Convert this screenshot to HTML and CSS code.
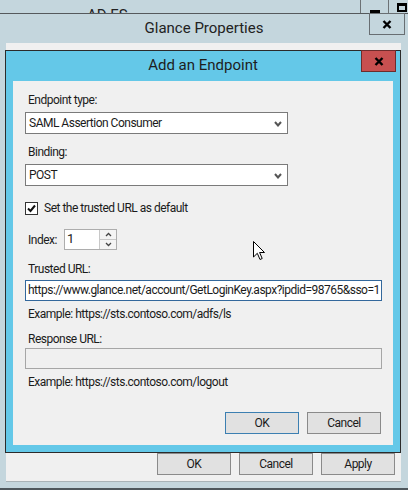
FILE: index.html
```html
<!DOCTYPE html>
<html lang="en">
<head>
  <meta charset="UTF-8">
  <title>Add an Endpoint</title>
  <link rel="stylesheet" href="styles.css">
</head>
<body>
  <div class="screen">

    <!-- window behind -->
    <div class="back-window">
      <div class="back-title">AD FS</div>
      <div class="caption-btn"><span class="min-glyph"></span></div>
      <div class="caption-btn"><span class="max-glyph"></span></div>
    </div>

    <div class="window">
      <div class="window-title">
        Glance Properties
        <div class="close-btn">
          <svg width="10" height="9" viewBox="0 0 10 9"><path d="M1.5 1 L8.5 8 M8.5 1 L1.5 8" stroke="#000" stroke-width="2.4" fill="none"/></svg>
        </div>
      </div>

      <div class="window-body">
        <div class="dialog">
          <div class="dialog-title">
            Add an Endpoint
            <div class="dialog-close">
              <svg width="10" height="9" viewBox="0 0 10 9"><path d="M1.5 1 L8.5 8 M8.5 1 L1.5 8" stroke="#000" stroke-width="2.4" fill="none"/></svg>
            </div>
          </div>

          <div class="dialog-body">
            <div class="field-label">Endpoint type:</div>
            <div class="select gap-4">
              <span>SAML Assertion Consumer</span>
              <svg class="chevron" width="8" height="6" viewBox="0 0 8 6"><path d="M1 1 L4 4.5 L7 1" stroke="#555" stroke-width="2" fill="none"/></svg>
            </div>

            <div class="field-label gap-10">Binding:</div>
            <div class="select gap-4">
              <span>POST</span>
              <svg class="chevron" width="8" height="6" viewBox="0 0 8 6"><path d="M1 1 L4 4.5 L7 1" stroke="#555" stroke-width="2" fill="none"/></svg>
            </div>

            <div class="check-row">
              <span class="checkbox">
                <svg width="11" height="11" viewBox="0 0 11 11"><path d="M2 5.5 L4.5 8 L9 2.5" stroke="#111" stroke-width="2" fill="none"/></svg>
              </span>
              <span>Set the trusted URL as default</span>
            </div>

            <div class="index-row">
              <span class="index-label">Index:</span>
              <div class="spinner">
                <span class="spin-value">1</span>
                <div class="spin-btns">
                  <span class="spin-btn"><svg width="7" height="5" viewBox="0 0 7 5"><path d="M1 4 L3.5 1.5 L6 4" stroke="#444" stroke-width="1.3" fill="none"/></svg></span>
                  <span class="spin-btn"><svg width="7" height="5" viewBox="0 0 7 5"><path d="M1 1 L3.5 3.5 L6 1" stroke="#444" stroke-width="1.3" fill="none"/></svg></span>
                </div>
              </div>
            </div>

            <div class="field-label gap-11">Trusted URL:</div>
            <div class="textbox focused">https://www.glance.net/account/GetLoginKey.aspx?ipdid=98765&amp;sso=1<span class="caret"></span></div>
            <div class="field-label gap-5">Example: https://sts.contoso.com/adfs/ls</div>

            <div class="field-label gap-9">Response URL:</div>
            <div class="textbox disabled"></div>
            <div class="field-label gap-5">Example: https://sts.contoso.com/logout</div>

            <div class="dialog-buttons">
              <div class="button default">OK</div>
              <div class="button">Cancel</div>
            </div>
          </div>
        </div>

        <div class="window-buttons">
          <div class="button">OK</div>
          <div class="button">Cancel</div>
          <div class="button">Apply</div>
        </div>
      </div>
    </div>

    <div class="desk-edge"></div>

    <svg class="cursor" width="13" height="20" viewBox="0 0 13 20">
      <path d="M0.5 0.5 L0.5 16 L4.3 12.3 L7 18.5 L9.2 17.5 L6.6 11.5 L11.5 11.5 Z" fill="#fff" stroke="#000" stroke-width="1"/>
    </svg>
  </div>
</body>
</html>
```

FILE: styles.css
```css
body {
  margin: 0;
  background-color: #c4d6dd;
  font-family: Roboto, "Liberation Sans", sans-serif;
  font-size: 12px;
  color: #1b1b1b;
}

.screen {
  position: relative;
  width: 408px;
  height: 490px;
  overflow: hidden;
}

/* window behind */
.back-window {
  display: flex;
  width: 416px;
  height: 13px;
  border-bottom: 1px solid #55595c;
}

.back-title {
  flex: 1;
  padding: 8px 0 0 87px;
  font-size: 15px;
  line-height: 15px;
  color: #222;
  overflow: hidden;
}

.caption-btn {
  width: 27px;
  border-left: 1px solid #6d7275;
  display: flex;
  justify-content: center;
  align-items: flex-end;
}

.min-glyph {
  width: 10px;
  height: 3px;
  background: #000;
}

.max-glyph {
  width: 6px;
  height: 4px;
  border: 2px solid #000;
  border-top-width: 3px;
  margin-bottom: 1px;
  margin-right: 1px;
}

/* Glance Properties */
.window-title {
  position: relative;
  height: 29px;
  line-height: 29px;
  text-align: center;
  font-size: 15px;
  color: #222;
}

.close-btn {
  position: absolute;
  top: -1px;
  left: 369px;
  width: 34px;
  height: 20px;
  border: 1px solid #686e72;
  display: flex;
  align-items: center;
  justify-content: center;
}

.window-body {
  margin-left: 6px;
  width: 395px;
  background: #f0f0f0;
  padding: 7px 0 6px;
  border-bottom: 1px solid #a9b3b7;
  letter-spacing: -0.5px;
}

.dialog {
  margin-left: -1px;
  border: 1px solid #2b2b2b;
  background: #64c8e8;
  padding: 0 7px 7px;
  width: 380px;
}

.dialog-title {
  position: relative;
  height: 30px;
  line-height: 29px;
  text-align: center;
  font-size: 15px;
  letter-spacing: 0;
  color: #1e1e1e;
}

.dialog-close {
  position: absolute;
  top: -1px;
  right: -3px;
  width: 33px;
  height: 20px;
  background: #c75050;
  border: 1px solid #6d2c2c;
  display: flex;
  align-items: center;
  justify-content: center;
}

.dialog-body {
  background: #f0f0f0;
  height: 364px;
  box-sizing: border-box;
  padding: 11px 12px 0;
}

.field-label {
  padding-left: 3px;
  line-height: 16px;
}

.gap-4 { margin-top: 4px; }
.gap-5 { margin-top: 5px; }
.gap-9 { margin-top: 9px; }
.gap-10 { margin-top: 10px; }
.gap-11 { margin-top: 11px; }

.select {
  width: 263px;
  height: 22px;
  box-sizing: border-box;
  border: 1px solid #7a7a7a;
  background: #fff;
  display: flex;
  align-items: center;
  justify-content: space-between;
  padding: 0 5px 0 3px;
}

.chevron {
  margin-top: 1px;
}

.check-row {
  margin-top: 14px;
  height: 16px;
  display: flex;
  align-items: center;
  gap: 6px;
}

.checkbox {
  width: 11px;
  height: 11px;
  border: 1px solid #333;
  background: #fff;
  display: flex;
}

.index-row {
  margin-top: 13px;
  height: 21px;
  display: flex;
  align-items: center;
}

.index-label {
  width: 36px;
  padding-left: 3px;
}

.spinner {
  width: 53px;
  height: 21px;
  box-sizing: border-box;
  border: 1px solid #adadad;
  background: #fff;
  display: flex;
}

.spin-value {
  flex: 1;
  padding: 1px 0 0 2px;
  font-size: 13px;
}

.spin-btns {
  width: 16px;
  display: flex;
  flex-direction: column;
  border-left: 1px solid #c8c8c8;
}

.spin-btn {
  flex: 1;
  display: flex;
  align-items: center;
  justify-content: center;
  background: #f4f4f4;
}

.spin-btn + .spin-btn {
  border-top: 1px solid #c8c8c8;
}

.textbox {
  margin-top: 3px;
  width: 357px;
  height: 21px;
  box-sizing: border-box;
  border: 1px solid #7a7a7a;
  background: #fff;
  padding: 0 2px;
  line-height: 19px;
  white-space: nowrap;
  overflow: hidden;
}

.textbox.focused {
  border-color: #33689c;
}

.textbox.disabled {
  margin-top: 1px;
  background: #f0f0f0;
  border-color: #a6a6a6;
}

.caret {
  display: inline-block;
  width: 1px;
  height: 14px;
  background: #000;
  vertical-align: -3px;
  margin-left: 1px;
}

.button {
  width: 74px;
  height: 22px;
  box-sizing: border-box;
  border: 1px solid #8a8a8a;
  background: #e1e1e1;
  text-align: center;
  line-height: 20px;
}

.button.default {
  border-color: #3c7fb1;
}

.dialog-buttons {
  margin-top: 22px;
  display: flex;
  justify-content: flex-end;
  gap: 8px;
}

.window-buttons {
  display: flex;
  justify-content: flex-end;
  gap: 8px;
  padding-right: 6px;
}

.desk-edge {
  margin-top: 6px;
  height: 2px;
  background: #4e575c;
}

.cursor {
  position: absolute;
  left: 253px;
  top: 241px;
}
```
